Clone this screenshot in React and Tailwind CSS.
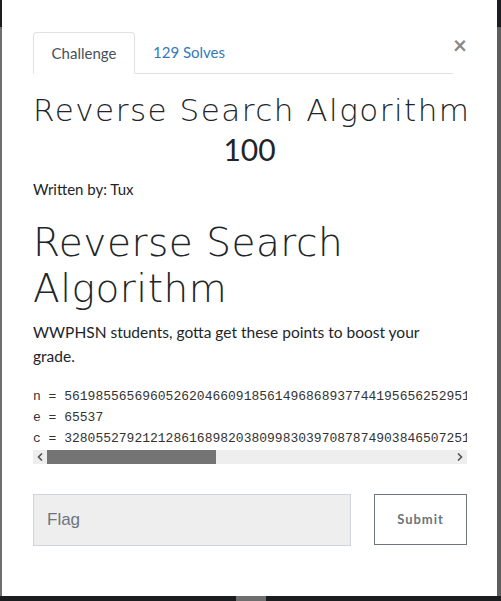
export default function App() {
  const lato = { fontFamily: 'Lato, "Noto Sans", sans-serif' };
  const thin = { fontFamily: '"DejaVu Sans", "Open Sans", sans-serif', fontWeight: 200 };
  return (
    <div className="relative w-[501px] h-[601px] bg-[#1b1e21] overflow-hidden">
      {/* side strips */}
      <div className="absolute left-0 top-[27px] w-[2px] h-[569px] bg-[#6f6f6f]" />
      <div className="absolute right-0 top-[27px] w-[4px] h-[569px] bg-[#5e5e5e]" />
      <div className="absolute left-[236px] bottom-0 w-[30px] h-[5px] bg-[#6e6e6e]" />
      <div
        className="absolute left-[2px] top-0 w-[495px] h-[596px] bg-white text-[#212529] px-[31px] pt-[32px]"
        style={lato}
      >
        {/* tabs */}
        <div className="relative flex items-end w-[420px] border-b border-[#dee2e6] h-[42px]">
          <div className="h-[42px] w-[102px] -mb-px border border-[#dee2e6] border-b-white bg-white rounded-t-[4px] flex items-center justify-center text-[15px] text-[#495057]">
            Challenge
          </div>
          <div className="h-[42px] px-[18px] flex items-center text-[15px] text-[#337ab7]">
            129 Solves
          </div>
        </div>
        <div className="absolute right-[30px] top-[33px] text-[#888] text-[24px] font-bold leading-none">
          ×
        </div>

        {/* title */}
        <div
          className="mt-[16px] text-center text-[31px] leading-[40px] tracking-[1.5px] whitespace-nowrap"
          style={thin}
        >
          Reverse Search Algorithm
        </div>
        <div className="text-center text-[30px] leading-[38px] text-[#212529]">100</div>
        <div className="mt-[10px] text-[15px] leading-[22px]">Written by: Tux</div>

        <div
          className="mt-[20px] text-[39px] leading-[46px] tracking-[0.5px]"
          style={thin}
        >
          Reverse Search
          <br />
          Algorithm
        </div>
        <p className="mt-[8px] text-[15.5px] leading-[24px] w-[420px]">
          WWPHSN students, gotta get these points to boost your grade.
        </p>

        {/* code */}
        <div className="mt-[18px] w-[434px]">
          <pre
            className="overflow-hidden text-[13px] leading-[21px] text-[#333]"
            style={{ fontFamily: '"Liberation Mono", monospace' }}
          >
{`n = 5619855656960526204660918561496868937744195656252951
e = 65537
c = 3280552792121286168982038099830397087874903846507251`}
          </pre>
          <div className="mt-[1px] flex items-center h-[14px] bg-[#eeeeee] text-[#555] text-[11px] leading-none">
            <div className="w-[14px] flex justify-center">
              <svg width="6" height="8" viewBox="0 0 6 8"><path d="M5 0.5 L1.5 4 L5 7.5" stroke="#555" strokeWidth="1.6" fill="none" /></svg>
            </div>
            <div className="w-[169px] h-[14px] bg-[#747474]" />
            <div className="flex-1" />
            <div className="w-[14px] flex justify-center">
              <svg width="6" height="8" viewBox="0 0 6 8"><path d="M1 0.5 L4.5 4 L1 7.5" stroke="#555" strokeWidth="1.6" fill="none" /></svg>
            </div>
          </div>
        </div>

        {/* form */}
        <div className="mt-[30px] flex justify-between w-[434px]">
          <div
            className="w-[318px] h-[52px] bg-[#eeeeee] border border-[#ced4da] flex items-center px-[13px] text-[17px] text-[#6c757d]"
            style={{ fontFamily: '"Liberation Sans", Arial, sans-serif' }}
          >
            Flag
          </div>
          <div className="w-[93px] h-[51px] border border-[#6c757d] flex items-center justify-center text-[13px] font-bold tracking-[1px] text-[#6c757d]">
            Submit
          </div>
        </div>
      </div>
    </div>
  );
}
